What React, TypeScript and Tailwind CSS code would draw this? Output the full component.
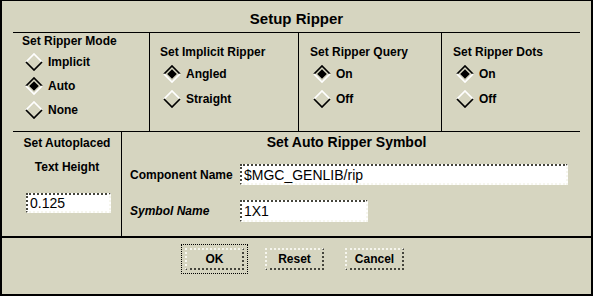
const font = "font-['Liberation_Sans',Arial,sans-serif]";

function Diamond({ on }: { on: boolean }) {
  const hi = on ? "#000000" : "#ffffff";
  const lo = on ? "#ffffff" : "#000000";
  return (
    <svg width="18" height="18" viewBox="0 0 18 18" className="shrink-0">
      <path d="M1 9 L9 1 L17 9" fill="none" stroke={hi} strokeWidth="1.7" />
      <path d="M1 9 L9 17 L17 9" fill="none" stroke={lo} strokeWidth="1.7" />
      {on && <path d="M4.2 9 L9 4.2 L13.8 9 L9 13.8 Z" fill="#000000" />}
    </svg>
  );
}

type RadioProps = { label: string; on?: boolean; rowH: string };

function Radio({ label, on = false, rowH }: RadioProps) {
  return (
    <div className={`flex items-center gap-[5px] pl-[3px] ${rowH}`}>
      <Diamond on={on} />
      <span className="text-[12px] font-bold leading-none">{label}</span>
    </div>
  );
}

function Group({
  title,
  options,
  selected,
  className,
}: {
  title: string;
  options: string[];
  selected: string;
  className: string;
}) {
  return (
    <div className={`flex flex-col pt-[11px] ${className}`}>
      <div className="h-[16px] text-[12px] font-bold leading-[16px]">{title}</div>
      <div className="mt-[1px] flex flex-col">
        {options.map((o) => (
          <Radio key={o} label={o} on={o === selected} rowH="h-[25px]" />
        ))}
      </div>
    </div>
  );
}

const field =
  "border-2 border-dotted border-t-[#45453c] border-l-[#45453c] border-b-[#f6f6ee] border-r-[#f6f6ee] bg-white px-[2px] text-[14px] leading-none flex items-center";

function Button({ label }: { label: string }) {
  return (
    <div className="flex h-[22px] w-[59px] items-center justify-center border-2 border-dotted border-t-[#f6f6ee] border-l-[#f6f6ee] border-b-[#45453c] border-r-[#45453c] text-[12px] font-bold">
      {label}
    </div>
  );
}

export default function App() {
  return (
    <div
      className={`flex h-[296px] w-[593px] flex-col border-t border-l-2 border-r-2 border-b-2 border-black bg-[#d6d5c0] text-black ${font}`}
    >
      <div className="h-[31px] pt-[9px] text-center text-[15px] font-bold leading-[17px]">
        Setup Ripper
      </div>
      <div className="mx-[11px] h-px bg-black" />

      <div className="mx-[11px] flex h-[98px]">
        <div className="flex w-[137px] flex-col border-r border-black pl-[9px]">
          <div className="h-[16px] text-[12px] font-bold leading-[16px]">Set Ripper Mode</div>
          <div className="mt-[1px] flex flex-col">
            <Radio label="Implicit" rowH="h-[24px]" />
            <Radio label="Auto" on rowH="h-[24px]" />
            <Radio label="None" rowH="h-[24px]" />
          </div>
        </div>
        <Group
          title="Set Implicit Ripper"
          options={["Angled", "Straight"]}
          selected="Angled"
          className="w-[149px] border-r border-black pl-[10px]"
        />
        <Group
          title="Set Ripper Query"
          options={["On", "Off"]}
          selected="On"
          className="w-[143px] border-r border-black pl-[11px]"
        />
        <Group
          title="Set Ripper Dots"
          options={["On", "Off"]}
          selected="On"
          className="flex-1 pl-[11px]"
        />
      </div>

      <div className="mx-[11px] h-px bg-black" />

      <div className="mx-[11px] flex h-[104px]">
        <div className="flex w-[109px] flex-col border-r border-black pt-[3px]">
          <div className="h-[16px] text-center text-[12px] font-bold leading-[16px]">
            Set Autoplaced
          </div>
          <div className="mt-[8px] h-[16px] text-center text-[12px] font-bold leading-[16px]">
            Text Height
          </div>
          <div className={`ml-[13px] mt-[18px] h-[20px] w-[85px] ${field}`}>0.125</div>
        </div>

        <div className="flex flex-1 flex-col pt-[2px]">
          <div className="pr-[9px] text-center text-[14px] font-bold leading-[17px]">
            Set Auto Ripper Symbol
          </div>
          <div className="mt-[13px] flex items-center pl-[8px]">
            <span className="w-[110px] text-[12px] font-bold">Component Name</span>
            <div className={`h-[21px] w-[328px] ${field}`}>$MGC_GENLIB/rip</div>
          </div>
          <div className="mt-[15px] flex items-center pl-[8px]">
            <span className="w-[110px] text-[12px] font-bold italic">Symbol Name</span>
            <div className={`h-[22px] w-[128px] ${field}`}>1X1</div>
          </div>
        </div>
      </div>

      <div className="h-[2px] bg-black" />

      <div className="flex items-center pl-[179px] pt-[6px]">
        <div className="border border-dotted border-black p-[3px]">
          <Button label="OK" />
        </div>
        <div className="ml-[17px]">
          <Button label="Reset" />
        </div>
        <div className="ml-[21px]">
          <Button label="Cancel" />
        </div>
      </div>
    </div>
  );
}
